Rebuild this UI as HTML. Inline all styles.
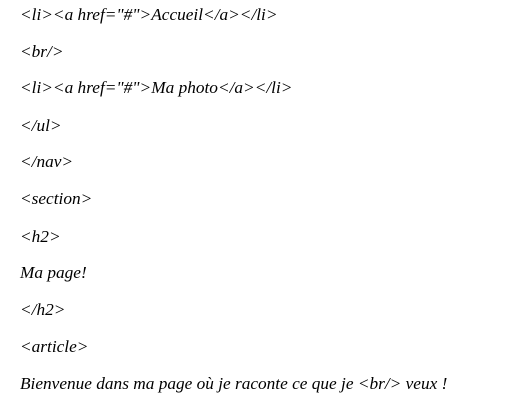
<!DOCTYPE html>
<html><head><meta charset="utf-8"><style>
html,body{margin:0;padding:0;background:#fff;width:516px;height:409px;overflow:hidden}
p{position:absolute;left:20px;margin:0;font-family:"Liberation Serif",serif;font-style:italic;font-size:17.3px;line-height:18px;color:#000;white-space:nowrap}
</style></head><body>
<p style="top:6px">&lt;li&gt;&lt;a href="#"&gt;Accueil&lt;/a&gt;&lt;/li&gt;</p>
<p style="top:43px">&lt;br/&gt;</p>
<p style="top:79px">&lt;li&gt;&lt;a href="#"&gt;Ma photo&lt;/a&gt;&lt;/li&gt;</p>
<p style="top:117px">&lt;/ul&gt;</p>
<p style="top:153px">&lt;/nav&gt;</p>
<p style="top:190px">&lt;section&gt;</p>
<p style="top:228px">&lt;h2&gt;</p>
<p style="top:264px">Ma page!</p>
<p style="top:301px">&lt;/h2&gt;</p>
<p style="top:338px">&lt;article&gt;</p>
<p style="top:375px">Bienvenue dans ma page où je raconte ce que je &lt;br/&gt; veux !</p>
</body></html>
